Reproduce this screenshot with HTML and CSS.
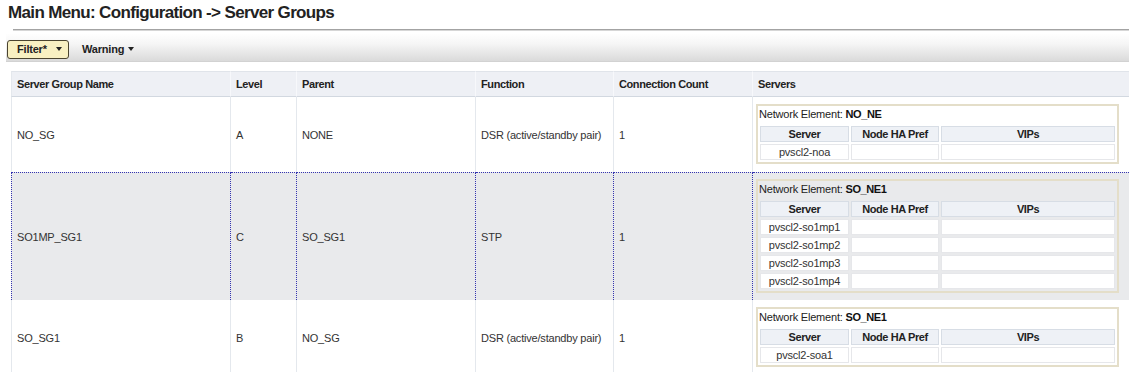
FILE: index.html
```html
<!DOCTYPE html>
<html lang="en">
<head>
  <meta charset="UTF-8">
  <title>Main Menu: Configuration -&gt; Server Groups</title>
  <link rel="stylesheet" href="styles.css">
</head>
<body>
  <h1 class="title">Main Menu: Configuration -&gt; Server Groups</h1>
  <div class="rule"></div>

  <div class="toolbar">
    <button class="btn btn-filter">Filter* <span class="caret"></span></button>
    <button class="btn btn-plain">Warning <span class="caret"></span></button>
  </div>

  <table class="grid">
    <colgroup>
      <col style="width: 220px">
      <col style="width: 66px">
      <col style="width: 179px">
      <col style="width: 138px">
      <col style="width: 139px">
      <col>
    </colgroup>
    <thead>
      <tr>
        <th>Server Group Name</th>
        <th>Level</th>
        <th>Parent</th>
        <th>Function</th>
        <th>Connection Count</th>
        <th>Servers</th>
      </tr>
    </thead>
    <tbody>
      <tr>
        <td>NO_SG</td>
        <td>A</td>
        <td>NONE</td>
        <td>DSR (active/standby pair)</td>
        <td>1</td>
        <td class="servers">
          <div class="ne-box">
            <div class="ne-label">Network Element: <b>NO_NE</b></div>
            <table class="ne-table">
              <tr><th class="c-server">Server</th><th class="c-pref">Node HA Pref</th><th>VIPs</th></tr>
              <tr><td>pvscl2-noa</td><td></td><td></td></tr>
            </table>
          </div>
        </td>
      </tr>
      <tr class="selected">
        <td>SO1MP_SG1</td>
        <td>C</td>
        <td>SO_SG1</td>
        <td>STP</td>
        <td>1</td>
        <td class="servers">
          <div class="ne-box">
            <div class="ne-label">Network Element: <b>SO_NE1</b></div>
            <table class="ne-table">
              <tr><th class="c-server">Server</th><th class="c-pref">Node HA Pref</th><th>VIPs</th></tr>
              <tr><td>pvscl2-so1mp1</td><td></td><td></td></tr>
              <tr><td>pvscl2-so1mp2</td><td></td><td></td></tr>
              <tr><td>pvscl2-so1mp3</td><td></td><td></td></tr>
              <tr><td>pvscl2-so1mp4</td><td></td><td></td></tr>
            </table>
          </div>
        </td>
      </tr>
      <tr>
        <td>SO_SG1</td>
        <td>B</td>
        <td>NO_SG</td>
        <td>DSR (active/standby pair)</td>
        <td>1</td>
        <td class="servers">
          <div class="ne-box">
            <div class="ne-label">Network Element: <b>SO_NE1</b></div>
            <table class="ne-table">
              <tr><th class="c-server">Server</th><th class="c-pref">Node HA Pref</th><th>VIPs</th></tr>
              <tr><td>pvscl2-soa1</td><td></td><td></td></tr>
            </table>
          </div>
        </td>
      </tr>
    </tbody>
  </table>
</body>
</html>
```

FILE: styles.css
```css
body {
  margin: 0;
  font-family: "Liberation Sans", Arial, sans-serif;
  font-size: 11px;
  letter-spacing: -0.2px;
  color: #333;
  background: #fff;
  overflow: hidden;
  white-space: nowrap;
}
.title {
  margin: 0;
  padding: 2px 8px 0;
  height: 27px;
  line-height: 22px;
  font-size: 17px;
  letter-spacing: -0.65px;
  color: #222;
}
.rule {
  margin-left: 13px;
  border-top: 1px solid #a3a3a3;
  border-bottom: 1px solid #d6d6d6;
}
.toolbar {
  margin: 3px 0 0 6px;
  height: 22px;
  padding: 4px 0 1px 1px;
  background: linear-gradient(#fefefe, #f6f6f6 35%, #dadada);
  border-bottom: 1px solid #d2d2d2;
  display: flex;
  align-items: center;
  gap: 9px;
}
.btn {
  font-family: inherit;
  font-size: 11px;
  font-weight: bold;
  letter-spacing: -0.2px;
  color: #222;
  height: 19px;
  padding: 0 6px 0 9px;
  display: flex;
  align-items: center;
  cursor: pointer;
}
.btn-filter {
  width: 62px;
  background: #f8f0c2;
  border: 1px solid #4a4430;
  border-radius: 3px;
}
.btn-filter .caret {
  margin-left: auto;
}
.btn-plain {
  background: none;
  border: none;
  padding-left: 4px;
}
.btn-plain .caret {
  margin-left: 4px;
}
.caret {
  display: inline-block;
  width: 0;
  height: 0;
  border-left: 3px solid transparent;
  border-right: 3px solid transparent;
  border-top: 4px solid #222;
}
.grid {
  margin: 9px 0 0 11px;
  width: 1124px;
  table-layout: fixed;
  border-collapse: separate;
  border-spacing: 0;
}
.grid > thead th,
.grid > tbody > tr > td {
  box-sizing: border-box;
  text-align: left;
  padding: 0 5px;
  border-right: 1px solid #e4e8ed;
}
.grid > thead th:first-child,
.grid > tbody > tr > td:first-child {
  border-left: 1px solid #e4e8ed;
}
.grid > thead th {
  height: 26px;
  background: #eef0f5;
  border-top: 1px solid #e0e4ea;
  border-bottom: 1px solid #d2d8e0;
  border-right-color: #f7f8fb;
  font-weight: bold;
  letter-spacing: -0.4px;
  color: #222;
}
.grid > tbody > tr > td {
  vertical-align: middle;
}
.grid > tbody > tr > td.servers {
  padding: 7px 15px 8px 3px;
}
.grid > tbody > tr.selected > td {
  background: #e9eaec;
  border-top: 1px dotted #3434b0;
  border-right: 1px dotted #3434b0;
}
.grid > tbody > tr.selected > td.servers {
  padding-top: 6px;
  padding-bottom: 7px;
}
.grid > tbody > tr.selected > td:first-child {
  border-left: 1px dotted #3434b0;
}
.ne-box {
  border: 2px solid #e4dec9;
}
.ne-label {
  height: 16px;
  line-height: 16px;
  padding-left: 1px;
  color: #222;
}
.ne-label b {
  color: #111;
  letter-spacing: -0.4px;
}
.ne-table {
  width: 100%;
  margin-top: 2px;
  border-spacing: 2px;
  table-layout: fixed;
}
.ne-table th,
.ne-table td {
  box-sizing: border-box;
  height: 16px;
  padding: 0 2px;
  text-align: center;
  font-size: 11px;
  line-height: 14px;
}
.ne-table th {
  background: #eef1f6;
  border: 1px solid #d7dde5;
  letter-spacing: -0.4px;
  color: #222;
}
.ne-table td {
  background: #fff;
  border: 1px solid #e6e7ea;
  color: #333;
}
.ne-table .c-server {
  width: 89px;
}
.ne-table .c-pref {
  width: 88px;
}
```
